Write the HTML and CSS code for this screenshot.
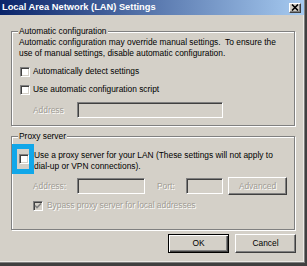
FILE: index.html
```html
<!DOCTYPE html>
<html lang="en">
<head>
    <meta charset="UTF-8">
    <title>Local Area Network (LAN) Settings</title>
    <link rel="stylesheet" href="styles.css">
</head>
<body>
    <div class="window">
        <div class="titlebar">
            <span class="title">Local Area Network (LAN) Settings</span>
            <span class="close-btn">
                <svg width="8" height="7" viewBox="0 0 8 7"><path d="M1 0.5L7 6.5M7 0.5L1 6.5" stroke="#000" stroke-width="1.6"/></svg>
            </span>
        </div>

        <div class="content">
            <!-- automatic configuration -->
            <div class="group">
                <div class="group-title">Automatic configuration</div>
                <p class="note">Automatic configuration may override manual settings.&nbsp; To ensure the<br>use of manual settings, disable automatic configuration.</p>
                <div class="check-row row-auto">
                    <span class="checkbox"></span>
                    <span>Automatically detect settings</span>
                </div>
                <div class="check-row row-script">
                    <span class="checkbox"></span>
                    <span>Use automatic configuration script</span>
                </div>
                <div class="field-row row-address">
                    <span class="label disabled addr-label">Address</span>
                    <span class="textbox script-box"></span>
                </div>
            </div>

            <!-- proxy server -->
            <div class="group group-proxy">
                <div class="group-title">Proxy server</div>
                <div class="check-row row-proxy">
                    <span class="checkbox proxy-check"><span class="highlight"></span></span>
                    <span>Use a proxy server for your LAN (These settings will not apply to<br>dial-up or VPN connections).</span>
                </div>
                <div class="field-row row-proxy-address">
                    <span class="label disabled addr-label">Address:</span>
                    <span class="textbox proxy-box"></span>
                    <span class="label disabled port-label">Port:</span>
                    <span class="textbox port-box"></span>
                    <span class="button disabled advanced-btn">Advanced</span>
                </div>
                <div class="check-row row-bypass">
                    <span class="checkbox checked-disabled">
                        <svg width="8" height="8" viewBox="0 0 8 8"><path d="M1 3.5L3 5.5L7 1.5" stroke="#808080" stroke-width="1.6" fill="none"/></svg>
                    </span>
                    <span class="disabled">Bypass proxy server for local addresses</span>
                </div>
            </div>

            <div class="actions">
                <span class="button default-btn">OK</span>
                <span class="button">Cancel</span>
            </div>
        </div>
    </div>
</body>
</html>
```

FILE: styles.css
```css
* {
    box-sizing: border-box;
    margin: 0;
    padding: 0;
}
html {
    background: #404040;
}
body {
    font-family: 'Liberation Sans', Arial, sans-serif;
    font-size: 8.4px;
    line-height: 11px;
    color: #000;
}
.window {
    width: 305px;
    height: 263px;
    background: #d4d0c8;
    border-right: 1px solid #808080;
    border-bottom: 1px solid #808080;
    box-shadow: inset -1px -1px 0 #ece9e4;
}
.titlebar {
    height: 15px;
    display: flex;
    align-items: center;
    justify-content: space-between;
    padding: 0 3px 0 2px;
    background: linear-gradient(to right, #0a246a, #a6caf0);
}
.title {
    color: #fff;
    font-weight: bold;
    font-size: 9.3px;
}
.close-btn {
    width: 12px;
    height: 10px;
    display: flex;
    align-items: center;
    justify-content: center;
    background: #d4d0c8;
    border: 1px solid;
    border-color: #fff #404040 #404040 #fff;
    box-shadow: inset -1px -1px 0 #808080;
}
.content {
    padding: 16px 0 0 11px;
}
.group {
    width: 284px;
    display: flex;
    flex-direction: column;
    align-items: flex-start;
    padding: 0 7px 7px 7px;
    border: 1px solid #808080;
    box-shadow: 1px 1px 0 #fff, inset 1px 1px 0 #fff;
}
.group-title {
    margin: -6px 0 0 -1px;
    padding: 0 1px;
    background: #d4d0c8;
}
.group-proxy {
    margin-top: 10px;
    padding-bottom: 18px;
}
.check-row {
    display: flex;
    align-items: center;
}
.field-row {
    display: flex;
    align-items: center;
}
.checkbox {
    position: relative;
    width: 10px;
    height: 10px;
    flex: none;
    display: flex;
    align-items: center;
    justify-content: center;
    background: #fff;
    border: 1px solid;
    border-color: #808080 #fff #fff #808080;
    box-shadow: inset 1px 1px 0 #404040, inset -1px -1px 0 #d4d0c8;
}
.checked-disabled {
    background: #d4d0c8;
}
.row-auto {
    margin: 7px 0 0 1px;
}
.row-script {
    margin: 7px 0 0 1px;
}
.check-row .checkbox {
    margin-right: 3px;
}
.row-address {
    margin: 7px 0 0 14px;
}
.label {
    flex: none;
}
.addr-label {
    width: 44px;
}
.disabled {
    color: #a09c94;
    text-shadow: 1px 1px 0 #fff;
}
.textbox {
    height: 16px;
    flex: none;
    background: #d4d0c8;
    border: 1px solid;
    border-color: #808080 #fff #fff #808080;
    box-shadow: inset 1px 1px 0 #404040, inset -1px -1px 0 #d4d0c8;
}
.script-box {
    width: 146px;
}
.row-proxy {
    margin-top: 8px;
    align-items: flex-start;
}
.row-proxy .proxy-check {
    margin: 4px 5px 0 0;
}
.highlight {
    position: absolute;
    left: -8px;
    top: -11px;
    width: 22px;
    height: 30px;
    border: 5px solid #11a7e9;
}
.row-proxy-address {
    margin: 5px 0 0 14px;
    height: 18px;
}
.proxy-box {
    width: 68px;
}
.port-label {
    margin-left: 12px;
    width: 29px;
}
.port-box {
    width: 37px;
}
.button {
    width: 61px;
    height: 19px;
    display: flex;
    align-items: center;
    justify-content: center;
    background: #d4d0c8;
    border: 1px solid;
    border-color: #fff #404040 #404040 #fff;
    box-shadow: inset -1px -1px 0 #808080;
}
.advanced-btn {
    width: 59px;
    height: 18px;
    margin-left: 5px;
}
.row-bypass {
    margin: 5px 0 0 14px;
}
.row-bypass .checkbox {
    margin-right: 4px;
}
.actions {
    width: 285px;
    margin-top: 4px;
    display: flex;
    justify-content: flex-end;
    gap: 6px;
}
.default-btn {
    border-color: #000;
    box-shadow: inset 1px 1px 0 #fff, inset -1px -1px 0 #404040, inset -2px -2px 0 #808080;
}
```
